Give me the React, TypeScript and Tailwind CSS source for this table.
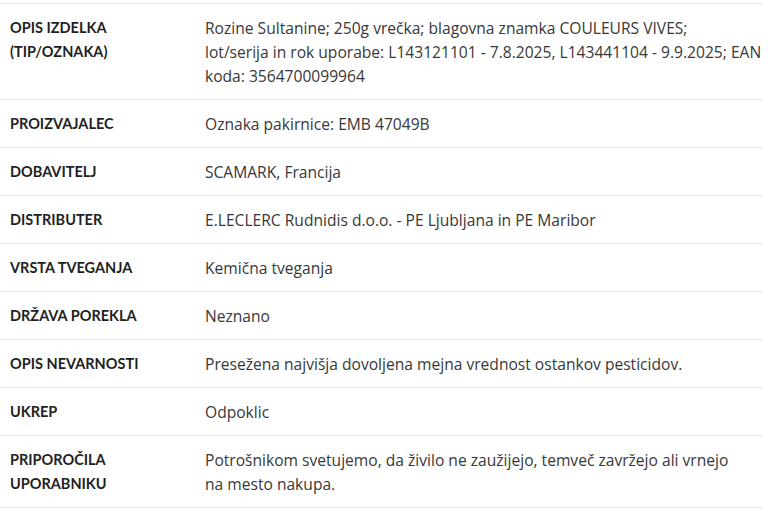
import type { ReactNode } from 'react'

const rows: [string, ReactNode][] = [
  [
    'OPIS IZDELKA (TIP/OZNAKA)',
    <>
      Rozine Sultanine; 250g vrečka; blagovna znamka COULEURS VIVES;
      <br />
      lot/serija in rok uporabe: L143121101 - 7.8.2025, L143441104 - 9.9.2025; EAN koda: 3564700099964
    </>,
  ],
  ['PROIZVAJALEC', 'Oznaka pakirnice: EMB 47049B'],
  ['DOBAVITELJ', 'SCAMARK, Francija'],
  ['DISTRIBUTER', 'E.LECLERC Rudnidis d.o.o. - PE Ljubljana in PE Maribor'],
  ['VRSTA TVEGANJA', 'Kemična tveganja'],
  ['DRŽAVA POREKLA', 'Neznano'],
  ['OPIS NEVARNOSTI', 'Presežena najvišja dovoljena mejna vrednost ostankov pesticidov.'],
  ['UKREP', 'Odpoklic'],
  [
    'PRIPOROČILA UPORABNIKU',
    <>
      Potrošnikom svetujemo, da živilo ne zaužijejo, temveč zavržejo ali vrnejo
      <br />
      na mesto nakupa.
    </>,
  ],
]

export default function App() {
  return (
    <div className="min-h-screen bg-white pt-[3px]">
      <div className="w-[763px] border-t border-[#e2e2e2]">
        {rows.map(([label, value]) => (
          <div key={label} className="grid grid-cols-[205px_1fr] border-b border-[#e2e2e2] py-[11.5px]">
            <div className="pl-[10px] pr-4 font-['Lato',sans-serif] text-[14.5px] leading-6 font-bold text-[#1f1f1f]">
              {label}
            </div>
            <div className="font-['Open_Sans',sans-serif] text-[15.6px] leading-6 text-[#383838]">
              {value}
            </div>
          </div>
        ))}
      </div>
    </div>
  )
}
